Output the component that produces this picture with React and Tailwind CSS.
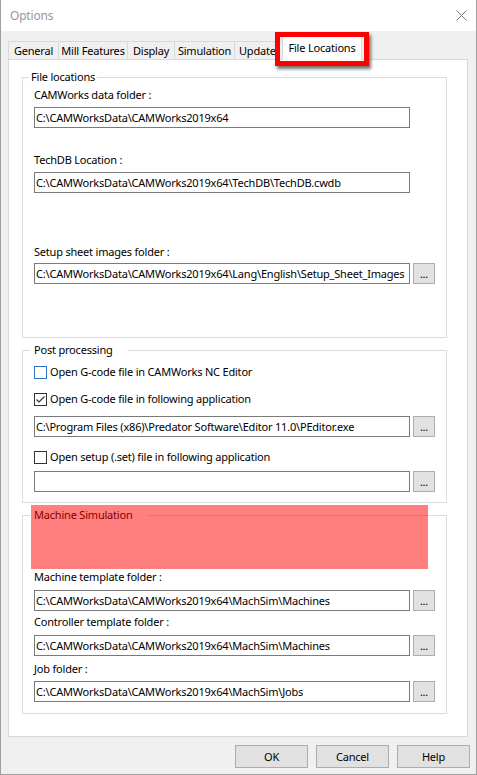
import React from "react";

function Label({ children, className = "" }) {
  return (
    <div className={"h-[16px] leading-[16px] text-[11px] text-black whitespace-nowrap " + className}>
      {children}
    </div>
  );
}

function PathField({ value, browse, className = "" }) {
  return (
    <div className={"flex items-center gap-[3px] " + className}>
      <div className="w-[376px] h-[21px] border border-[#7a7a7a] bg-white pl-[1px] flex items-center overflow-hidden whitespace-nowrap text-[11px] leading-[16px] text-black">
        {value}
      </div>
      {browse && (
        <div className="w-[22px] h-[21px] border border-[#adadad] bg-[#e1e1e1] flex items-center justify-center text-[11px] leading-[16px] text-black">
          ...
        </div>
      )}
    </div>
  );
}

function CheckRow({ checked, focus, children, className = "" }) {
  return (
    <div className={"h-[16px] flex items-center " + className}>
      <div
        className={
          "w-[13px] h-[13px] bg-white border flex items-center justify-center " +
          (focus ? "border-[#2a72c8]" : "border-[#333333]")
        }
      >
        {checked && (
          <svg width="11" height="11" viewBox="0 0 11 11">
            <polyline points="1.5,5.5 4,8 9.5,2.5" fill="none" stroke="#333" strokeWidth="1.2" />
          </svg>
        )}
      </div>
      <span className="ml-[3px] text-[11px] leading-[16px] text-black whitespace-nowrap">{children}</span>
    </div>
  );
}

function Tab({ children, w }) {
  return (
    <div className={"h-[18px] border-l border-t border-[#d9d9d9] flex items-center justify-center text-[11px] leading-[16px] text-black whitespace-nowrap " + w}>
      {children}
    </div>
  );
}

export default function App() {
  return (
    <div className="relative w-[477px] h-[775px] bg-[#f0f0f0] border-l border-r border-b border-[#a0a0a0] font-['Noto_Sans',sans-serif] tracking-[-0.2px] flex flex-col">
      {/* Title bar */}
      <div className="h-[31px] bg-white flex items-center justify-between pl-[9px] pr-[9px]">
        <span className="text-[12px] leading-[16px] text-[#999999]">Options</span>
        <svg width="11" height="11" viewBox="0 0 11 11">
          <path d="M0.5 0.5 L10.5 10.5 M10.5 0.5 L0.5 10.5" stroke="#777" strokeWidth="1" fill="none" />
        </svg>
      </div>

      {/* Tab strip */}
      <div className="h-[28px] ml-[7px] flex items-end">
        <Tab w="w-[50px]">General</Tab>
        <Tab w="w-[69px]">Mill Features</Tab>
        <Tab w="w-[47px]">Display</Tab>
        <Tab w="w-[60px]">Simulation</Tab>
        <Tab w="w-[50px] border-r justify-start pl-[4px]">Update</Tab>
        <div className="relative z-10 ml-[-2px] mb-[-1px] w-[80px] h-[25px] bg-white border-l border-t border-r border-[#d9d9d9] pt-[4px] flex justify-center text-[11px] leading-[16px] text-black whitespace-nowrap">
          File Locations
        </div>
      </div>

      {/* Tab page */}
      <div className="ml-[7px] w-[460px] h-[678px] bg-white border border-[#d9d9d9] pl-[13px] pt-[9px]">
        <fieldset className="w-[425px] border border-[#dcdcdc] px-[11px] pb-[53px]">
          <legend className="ml-[-5px] px-[2px] text-[11px] leading-[16px] text-black">File locations</legend>
          <Label className="mt-[2px]">CAMWorks data folder :</Label>
          <PathField className="mt-[4px]" value="C:\CAMWorksData\CAMWorks2019x64" />
          <Label className="mt-[24px]">TechDB Location :</Label>
          <PathField className="mt-[4px]" value="C:\CAMWorksData\CAMWorks2019x64\TechDB\TechDB.cwdb" />
          <Label className="mt-[51px]">Setup sheet images folder :</Label>
          <PathField className="mt-[3px]" browse value="C:\CAMWorksData\CAMWorks2019x64\Lang\English\Setup_Sheet_Images" />
        </fieldset>

        <fieldset className="mt-[4px] w-[425px] border border-[#dcdcdc] px-[11px] pb-[10px]">
          <legend className="ml-[-4px] pl-[4px] pr-[15px] text-[11px] leading-[16px] text-black">Post processing</legend>
          <CheckRow className="mt-[6px]" focus>Open G-code file in CAMWorks NC Editor</CheckRow>
          <CheckRow className="mt-[11px]" checked>Open G-code file in following application</CheckRow>
          <PathField className="mt-[9px]" browse value="C:\Program Files (x86)\Predator Software\Editor 11.0\PEditor.exe" />
          <CheckRow className="mt-[12px]">Open setup (.set) file in following application</CheckRow>
          <PathField className="mt-[6px]" browse value="" />
        </fieldset>

        <fieldset className="mt-[4px] w-[425px] border border-[#dcdcdc] px-[11px] pb-[11px]">
          <legend className="ml-[-4px] pl-[4px] pr-[15px] text-[11px] leading-[16px] text-black">Machine Simulation</legend>
          <Label className="mt-[46px]">Machine template folder :</Label>
          <PathField className="mt-[5px]" browse value="C:\CAMWorksData\CAMWorks2019x64\MachSim\Machines" />
          <Label className="mt-[3px]">Controller template folder :</Label>
          <PathField className="mt-[5px]" browse value="C:\CAMWorksData\CAMWorks2019x64\MachSim\Machines" />
          <Label className="mt-[5px]">Job folder :</Label>
          <PathField className="mt-[4px]" browse value="C:\CAMWorksData\CAMWorks2019x64\MachSim\Jobs" />
        </fieldset>
      </div>

      {/* Dialog buttons */}
      <div className="mt-[8px] pr-[6px] flex justify-end gap-[8px]">
        {["OK", "Cancel", "Help"].map((t) => (
          <div
            key={t}
            className="w-[73px] h-[23px] border border-[#adadad] bg-[#e1e1e1] flex items-center justify-center text-[11px] leading-[16px] text-black"
          >
            {t}
          </div>
        ))}
      </div>

      {/* Highlight callout around the active tab */}
      <div className="absolute left-[274px] top-[32px] w-[94px] h-[34px] border-[5px] border-[#ff0000] shadow-[2px_3px_3px_rgba(0,0,0,0.55)] z-20" />

      {/* Translucent marker over the simulation group */}
      <div className="absolute left-[30px] top-[505px] w-[397px] h-[64px] bg-[rgba(255,0,0,0.5)] z-20" />
    </div>
  );
}
